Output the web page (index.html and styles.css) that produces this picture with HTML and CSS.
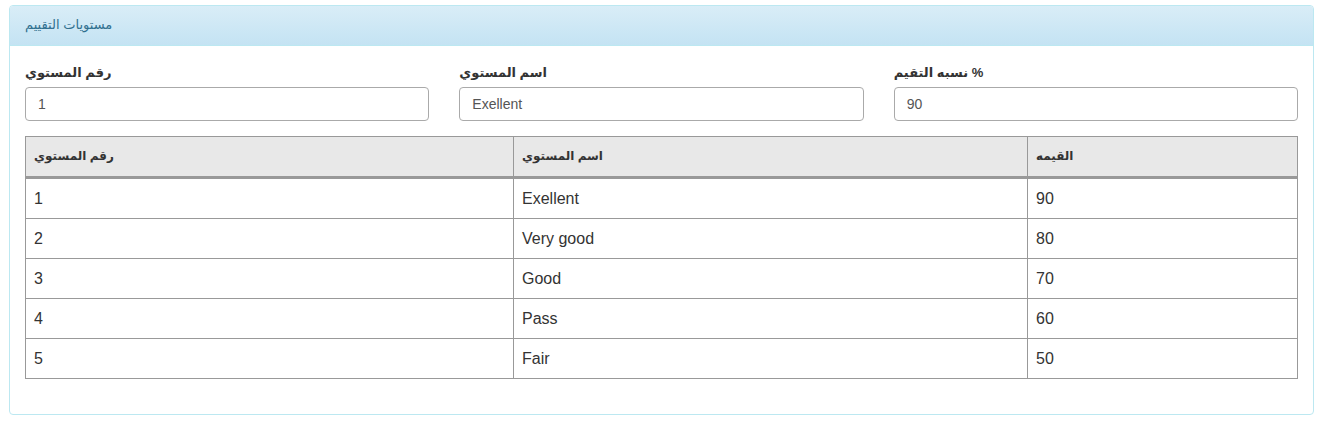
FILE: index.html
```html
<!DOCTYPE html>
<html lang="en">
<head>
    <meta charset="UTF-8">
    <meta name="viewport" content="width=device-width, initial-scale=1.0">
    <title>مستويات التقييم</title>
    <link rel="stylesheet" href="styles.css">
</head>
<body>

<div class="page">
    <!-- Levels panel -->
    <div class="panel">
        <div class="panel-heading">مستويات التقييم</div>
        <div class="panel-body">
            <div class="form-row">
                <div class="form-group">
                    <label>رقم المستوي</label>
                    <input type="text" class="form-control" value="1">
                </div>
                <div class="form-group">
                    <label>اسم المستوي</label>
                    <input type="text" class="form-control" value="Exellent">
                </div>
                <div class="form-group">
                    <label>نسبه التقيم %</label>
                    <input type="text" class="form-control" value="90">
                </div>
            </div>

            <table class="levels">
                <colgroup>
                    <col class="col-num">
                    <col class="col-name">
                    <col>
                </colgroup>
                <thead>
                    <tr>
                        <th>رقم المستوي</th>
                        <th>اسم المستوي</th>
                        <th>القيمه</th>
                    </tr>
                </thead>
                <tbody>
                    <tr><td>1</td><td>Exellent</td><td>90</td></tr>
                    <tr><td>2</td><td>Very good</td><td>80</td></tr>
                    <tr><td>3</td><td>Good</td><td>70</td></tr>
                    <tr><td>4</td><td>Pass</td><td>60</td></tr>
                    <tr><td>5</td><td>Fair</td><td>50</td></tr>
                </tbody>
            </table>
        </div>
    </div>
</div>

</body>
</html>
```

FILE: styles.css
```css
/* General styling */
body {
    font-family: "Liberation Sans", Arial, "DejaVu Sans", sans-serif;
    margin: 0;
    padding: 0;
    background-color: #ffffff;
    color: #333;
    font-size: 14px;
}

.page {
    padding: 5px 9px;
}

/* Panel */
.panel {
    border: 1px solid #bce8f1;
    border-radius: 4px;
    background: #fff;
}

.panel-heading {
    height: 39px;
    line-height: 37px;
    padding: 0 15px;
    color: #31708f;
    font-size: 13px;
    background: linear-gradient(to bottom, #d9edf7 0%, #c4e3f3 100%);
    border-bottom: 1px solid #bce8f1;
    border-radius: 3px 3px 0 0;
}

.panel-body {
    padding: 18px 15px 15px;
}

/* Form */
.form-row {
    display: flex;
    gap: 30px;
}

.form-group {
    flex: 1;
    margin-bottom: 15px;
}

.form-group label {
    display: block;
    font-weight: bold;
    font-size: 13px;
    line-height: 18px;
    margin-bottom: 5px;
}

.form-control {
    box-sizing: border-box;
    width: 100%;
    height: 34px;
    padding: 6px 12px;
    font-family: inherit;
    font-size: 14px;
    color: #555;
    border: 1px solid #aaa;
    border-radius: 4px;
    background: #fff;
}

/* Table */
.levels {
    width: 100%;
    border-collapse: collapse;
    border: 1px solid #999;
    margin-bottom: 20px;
    font-size: 16px;
}

.col-num {
    width: 488px;
}

.col-name {
    width: 514px;
}

.levels th {
    text-align: left;
    font-size: 12px;
    font-weight: bold;
    background: #e8e8e8;
    padding: 8px;
    line-height: 23px;
    border: 1px solid #999;
    border-bottom: 3px solid #999;
}

.levels td {
    padding: 8px;
    line-height: 23px;
    border: 1px solid #999;
}
```
